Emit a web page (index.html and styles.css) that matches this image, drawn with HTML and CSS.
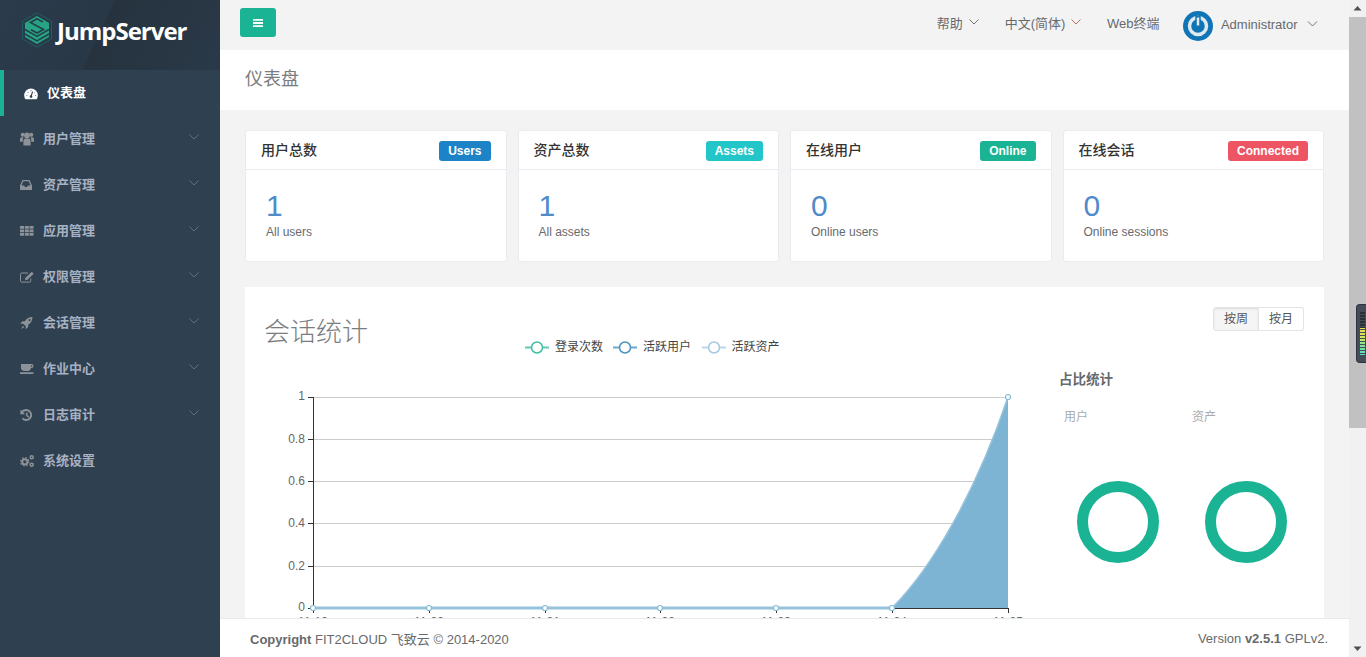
FILE: index.html
```html
<!DOCTYPE html>
<html lang="zh-CN">
<head>
  <meta charset="UTF-8">
  <title>JumpServer</title>
  <meta name="viewport" content="width=device-width, initial-scale=1.0">
  <link rel="stylesheet" href="styles.css">
</head>
<body>
<div class="app">

  <!-- Sidebar -->
  <nav class="sidebar">
    <div class="logo">
      <svg class="logo-mark" viewBox="0 0 30 36">
        <path d="M15 .8 L29.500 9 V27 L15 35.200 L.5 27 V9 Z" fill="none" stroke="#1d5f60" stroke-width="1"/>
        <path d="M15 4 L27 11 V25 L15 32 L3 25 V11 Z" fill="#26a585"/>
        <path d="M3 17.500 L15 24.500 L27 17.500M3 22 L15 29 L27 22" fill="none" stroke="#24404a" stroke-width="1.500"/>
        <path d="M21 10 L15 6.700 L8.500 10.500 L21.500 17.500 L15 21 L9 17.700" fill="none" stroke="#24404a" stroke-width="1.700"/>
      </svg>
      <span class="logo-text">JumpServer</span>
    </div>
    <ul class="menu">
      <li class="menu-item active">
        <svg class="icon" viewBox="0 0 14 14"><g transform="translate(0 2)"><path d="M7 .5A6.800 6.800 0 0 0 .2 7.300c0 1.500.4 2.900 1.200 4h11.200c.8-1.100 1.200-2.500 1.200-4A6.800 6.800 0 0 0 7 .5z" fill="currentColor"/><path d="M7 8.500 8.600 3.600M2.600 7.500h.6M3.800 4.400h.5M7 2.600v.6M10.400 4.600h.4M11 7.500h.6" stroke="#2f4050" stroke-width="1.100" fill="none"/><circle cx="7" cy="8.600" r="1.300" fill="#2f4050"/></g></svg>
        <span class="menu-label">仪表盘</span>
      </li>
      <li class="menu-item">
        <svg class="icon" viewBox="0 0 14 14"><circle cx="2.700" cy="2.800" r="2" fill="currentColor"/><circle cx="11.300" cy="2.800" r="2" fill="currentColor"/><circle cx="7" cy="3.400" r="2.900" fill="currentColor"/><path d="M0 9.800V7.600C0 6 .7 5.200 2 5.200h1.400C3 6.500 2.700 8 2.700 9.800zM14 9.800V7.600c0-1.600-.7-2.400-2-2.400h-1.400c.4 1.300.7 2.800.7 4.600zM3.400 13.600V9.500C3.400 7.300 4.300 6.500 5.600 6.500h2.800c1.300 0 2.200.8 2.200 3v4.100z" fill="currentColor"/></svg>
        <span class="menu-label">用户管理</span>
        <svg class="chevron" viewBox="0 0 10 6"><path d="M.5.5 5 5 9.500.5"/></svg>
      </li>
      <li class="menu-item">
        <svg class="icon" viewBox="0 0 14 14"><path d="M2.500 2h7L12 7.500V12H0V7.500zM3.300 3.300 1.500 7.500h2.600l.8 1.500h2.200l.8-1.500h2.600L8.700 3.300z" fill="currentColor" fill-rule="evenodd"/></svg>
        <span class="menu-label">资产管理</span>
        <svg class="chevron" viewBox="0 0 10 6"><path d="M.5.5 5 5 9.500.5"/></svg>
      </li>
      <li class="menu-item">
        <svg class="icon" viewBox="0 0 14 14"><path d="M0 2h4v2.700H0zM4.800 2h4v2.700h-4zM9.500 2h4v2.700h-4zM0 5.500h4v2.700H0zM4.800 5.500h4v2.700h-4zM9.500 5.500h4v2.700h-4zM0 9h4v2.700H0zM4.800 9h4v2.700h-4zM9.500 9h4v2.700h-4z" fill="currentColor"/></svg>
        <span class="menu-label">应用管理</span>
        <svg class="chevron" viewBox="0 0 10 6"><path d="M.5.5 5 5 9.500.5"/></svg>
      </li>
      <li class="menu-item">
        <svg class="icon" viewBox="0 0 14 14"><path d="M10.800 8.500v2.300c0 .8-.5 1.300-1.300 1.300H1.800c-.8 0-1.300-.5-1.300-1.300V4.300C.5 3.500 1 3 1.800 3H8" fill="none" stroke="currentColor" stroke-width="1"/><path d="M11.800 1.800 13.700 3.700 7.500 9.800 5 10.300 5.500 7.800z" fill="currentColor"/></svg>
        <span class="menu-label">权限管理</span>
        <svg class="chevron" viewBox="0 0 10 6"><path d="M.5.5 5 5 9.500.5"/></svg>
      </li>
      <li class="menu-item">
        <svg class="icon" viewBox="0 0 14 14"><path d="M12.500 1C8.700 1 6.300 2.800 4.800 5.300H2.400L.2 7.800h3L5.700 10.300v3l2.500-2.300V8.700C10.700 7.200 12.500 4.800 12.500 1z" fill="currentColor"/><circle cx="9.600" cy="4" r="1" fill="#2f4050"/><path d="M3 9.800 1 13l3.300-1.800z" fill="currentColor"/></svg>
        <span class="menu-label">会话管理</span>
        <svg class="chevron" viewBox="0 0 10 6"><path d="M.5.5 5 5 9.500.5"/></svg>
      </li>
      <li class="menu-item">
        <svg class="icon" viewBox="0 0 14 14"><path d="M1 2h10.500c1.200 0 2 .8 2 1.900s-.8 2-2 2H11c-.3 1.500-1.300 3-2.800 3H4C2.300 8.900 1 7.500 1 5.800zM11 3.200v1.500h.5c.4 0 .8-.3.8-.8s-.4-.7-.8-.7zM0 10.300h13.500V12H0z" fill="currentColor" fill-rule="evenodd"/></svg>
        <span class="menu-label">作业中心</span>
        <svg class="chevron" viewBox="0 0 10 6"><path d="M.5.5 5 5 9.500.5"/></svg>
      </li>
      <li class="menu-item">
        <svg class="icon" viewBox="0 0 14 14"><path d="M2.400 3.700A5 5 0 1 1 2.500 10.400" fill="none" stroke="currentColor" stroke-width="1.900"/><path d="M.4 1.500v4.800h4.800z" fill="currentColor"/><path d="M6.800 4.500v3.200L9 9" fill="none" stroke="currentColor" stroke-width="1.400"/></svg>
        <span class="menu-label">日志审计</span>
        <svg class="chevron" viewBox="0 0 10 6"><path d="M.5.5 5 5 9.500.5"/></svg>
      </li>
      <li class="menu-item">
        <svg class="icon" viewBox="0 0 14 14"><circle cx="4.800" cy="7.800" r="2.600" fill="none" stroke="currentColor" stroke-width="2"/><circle cx="4.800" cy="7.800" r="4.100" fill="none" stroke="currentColor" stroke-width="1.300" stroke-dasharray="1.600 1.620"/><circle cx="11.700" cy="3.200" r="1.500" fill="none" stroke="currentColor" stroke-width="1.500"/><circle cx="11.700" cy="10.800" r="1.500" fill="none" stroke="currentColor" stroke-width="1.500"/></svg>
        <span class="menu-label">系统设置</span>
      </li>
    </ul>
  </nav>

  <div class="main">
    <!-- Top bar -->
    <header class="navbar">
      <button class="toggle-btn">
        <svg viewBox="0 0 10 8"><path d="M0 0h10v1.800H0zM0 3.100h10v1.800H0zM0 6.200h10V8H0z" fill="#fff"/></svg>
      </button>
      <div class="nav-right">
        <span class="nav-item help">帮助 <svg class="nav-chevron" viewBox="0 0 10 6"><path d="M.5.5 5 5 9.500.5"/></svg></span>
        <span class="nav-item">中文(简体) <svg class="nav-chevron lang" viewBox="0 0 10 6"><path d="M.5.5 5 5 9.500.5"/></svg></span>
        <span class="nav-item web">Web终端</span>
        <span class="nav-item user">
          <svg class="avatar" viewBox="0 0 30 30">
            <circle cx="15" cy="15" r="15" fill="#0f75b5"/>
            <circle cx="15" cy="15" r="8.500" fill="none" stroke="#dfe9f0" stroke-width="3.500"/>
            <path d="M15 5v10" stroke="#0f75b5" stroke-width="5.500"/>
            <path d="M15 6.500v8" stroke="#dfe9f0" stroke-width="2.500"/>
          </svg>
          <span class="user-name">Administrator</span>
          <svg class="nav-chevron wide" viewBox="0 0 10 6"><path d="M.5.5 5 5 9.500.5"/></svg>
        </span>
      </div>
    </header>

    <div class="page-heading">仪表盘</div>

    <div class="content">
      <section class="cards">
        <div class="card">
          <div class="card-head"><h5>用户总数</h5><span class="badge users">Users</span></div>
          <div class="card-body"><div class="count">1</div><small>All users</small></div>
        </div>
        <div class="card">
          <div class="card-head"><h5>资产总数</h5><span class="badge assets">Assets</span></div>
          <div class="card-body"><div class="count">1</div><small>All assets</small></div>
        </div>
        <div class="card">
          <div class="card-head"><h5>在线用户</h5><span class="badge online">Online</span></div>
          <div class="card-body"><div class="count">0</div><small>Online users</small></div>
        </div>
        <div class="card">
          <div class="card-head"><h5>在线会话</h5><span class="badge connected">Connected</span></div>
          <div class="card-body"><div class="count">0</div><small>Online sessions</small></div>
        </div>
      </section>

      <section class="panel">
        <div class="panel-top">
          <h2>会话统计</h2>
          <div class="btn-group">
            <span class="btn pressed">按周</span>
            <span class="btn">按月</span>
          </div>
        </div>
        <div class="panel-row">
          <svg class="chart" viewBox="265 335 775 300">
            <!-- legend -->
            <g class="legend">
              <path d="M525 347.500h24" stroke="#63c9b3" stroke-width="2"/>
              <circle cx="537" cy="347.500" r="5.500" fill="#fff" stroke="#3cbfa4" stroke-width="1.500"/>
              <text x="555" y="351">登录次数</text>
              <path d="M613 347.500h24" stroke="#6aa9cf" stroke-width="2"/>
              <circle cx="625" cy="347.500" r="5.500" fill="#fff" stroke="#4a93c0" stroke-width="1.500"/>
              <text x="643" y="351">活跃用户</text>
              <path d="M702 347.500h24" stroke="#b9d6ea" stroke-width="2"/>
              <circle cx="714" cy="347.500" r="5.500" fill="#fff" stroke="#a5c9e2" stroke-width="1.500"/>
              <text x="731.500" y="351">活跃资产</text>
            </g>
            <!-- grid -->
            <path d="M313 397.500h695M313 439.500h695M313 481.500h695M313 523.500h695M313 566.500h695" stroke="#ccc" fill="none"/>
            <!-- area -->
            <path d="M892 608C932 568 976 492 1008 397V608Z" fill="#7db4d3"/>
            <path d="M892 608C932 568 976 492 1008 397" fill="none" stroke="#96c3dc" stroke-width="1.500"/>
            <!-- axes -->
            <path d="M308 397.500h5.500M308 439.500h5M308 481.500h5M308 523.500h5M308 566.500h5M308 608.500h5M313.500 397v216M313 608.500h695M429.500 608v5M545.500 608v5M660.500 608v5M776.500 608v5M892.500 608v5M1008.500 608v5" stroke="#333" fill="none"/>
            <path d="M313 608h579" stroke="#96c3dc" stroke-width="3"/>
            <g fill="#fff" stroke="#86bcd8" stroke-width="1.200">
              <circle cx="313" cy="608" r="2.500"/><circle cx="429" cy="608" r="2.500"/><circle cx="545" cy="608" r="2.500"/>
              <circle cx="660" cy="608" r="2.500"/><circle cx="776" cy="608" r="2.500"/><circle cx="892" cy="608" r="2.500"/>
              <circle cx="1008" cy="397" r="2.500"/>
            </g>
            <g class="y-labels">
              <text x="305" y="400">1</text><text x="305" y="443">0.8</text><text x="305" y="485">0.6</text>
              <text x="305" y="527">0.4</text><text x="305" y="570">0.2</text><text x="305" y="611">0</text>
            </g>
            <g class="x-labels">
              <text x="313" y="626">11-19</text><text x="429" y="626">11-20</text><text x="545" y="626">11-21</text>
              <text x="660" y="626">11-22</text><text x="776" y="626">11-23</text><text x="892" y="626">11-24</text><text x="1008" y="626">11-25</text>
            </g>
          </svg>
          <div class="ratio">
            <h4>占比统计</h4>
            <div class="ratio-cols">
              <div class="ratio-col"><span>用户</span><div class="donut"></div></div>
              <div class="ratio-col"><span>资产</span><div class="donut"></div></div>
            </div>
          </div>
        </div>
      </section>
    </div>

    <footer class="footer">
      <div><strong>Copyright</strong> FIT2CLOUD 飞致云 © 2014-2020</div>
      <div>Version <strong>v2.5.1</strong> GPLv2.</div>
    </footer>
  </div>

  <!-- window scrollbar -->
  <div class="scrollbar">
    <svg class="arrow" viewBox="0 0 17 17"><path d="M8.500 6 12.500 10.500H4.500Z" fill="#505050"/></svg>
    <div class="thumb"></div>
    <svg class="arrow" viewBox="0 0 17 17"><path d="M8.500 11 12.500 6.500H4.500Z" fill="#505050"/></svg>
    <div class="meter"><div class="meter-bars"></div></div>
  </div>
</div>
</body>
</html>
```

FILE: styles.css
```css
* {
  box-sizing: border-box;
}
html, body {
  margin: 0;
  padding: 0;
  height: 100%;
  overflow: hidden;
}
body {
  font-family: "Liberation Sans", "Noto Sans CJK SC", sans-serif;
  font-size: 13px;
  color: #676a6c;
  background: #f3f3f4;
}
.app {
  display: flex;
  height: 100vh;
  position: relative;
}

/* Sidebar */
.sidebar {
  width: 220px;
  flex-shrink: 0;
  background: #2f4050;
}
.logo {
  height: 70px;
  padding: 12px 0 0 22px;
  display: flex;
  align-items: flex-start;
  gap: 4px;
  background: linear-gradient(115deg, #2b3b4b 0%, #293847 45%, #26333f 46%, #2a3948 100%);
}
.logo-mark {
  width: 30px;
  height: 36px;
  flex-shrink: 0;
}
.logo-text {
  font-family: "Open Sans", sans-serif;
  font-weight: 700;
  font-size: 24px;
  line-height: 38px;
  color: #fff;
  letter-spacing: -1px;
  margin-left: 1px;
}
.menu {
  list-style: none;
  margin: 0;
  padding: 0;
}
.menu-item {
  height: 46px;
  padding-left: 20px;
  display: flex;
  align-items: center;
  color: #a7b1c2;
  font-weight: 700;
  position: relative;
}
.menu-item.active {
  color: #fff;
  padding-left: 24px;
}
.menu-item.active::before {
  content: "";
  position: absolute;
  left: 0;
  top: 0;
  bottom: 0;
  width: 4px;
  background: #1ab394;
}
.icon {
  width: 14px;
  height: 14px;
  flex-shrink: 0;
  margin-right: 9px;
  color: #8d9299;
}
.active .icon {
  color: #fff;
}
.menu-label {
  line-height: 18px;
}
.chevron {
  position: absolute;
  right: 21px;
  top: 18px;
  width: 10px;
  height: 6px;
  fill: none;
  stroke: #6d7b8a;
  stroke-width: 0.8;
}

/* Top bar */
.main {
  flex: 1;
  min-width: 0;
  display: flex;
  flex-direction: column;
}
.navbar {
  height: 50px;
  flex-shrink: 0;
  padding: 8px 31px 0 20px;
  display: flex;
  justify-content: space-between;
  align-items: flex-start;
}
.toggle-btn {
  width: 36px;
  height: 29px;
  border: none;
  border-radius: 3px;
  background: #1ab394;
  display: flex;
  align-items: center;
  justify-content: center;
  padding: 0;
}
.toggle-btn svg {
  width: 10px;
  height: 8px;
}
.nav-right {
  display: flex;
  align-items: center;
  gap: 25px;
  height: 36px;
}
.nav-item {
  display: flex;
  align-items: center;
  gap: 6px;
  padding-bottom: 8px;
  color: #676a6c;
}
.nav-item.help {
  margin-right: 1px;
}
.nav-item.web {
  margin-left: 0.5px;
}
.nav-chevron {
  width: 10px;
  height: 6px;
  fill: none;
  stroke: #666;
  stroke-width: 0.9;
}
.nav-chevron.lang {
  stroke: #b8604f;
}
.nav-chevron.wide {
  width: 11px;
  margin-left: 1.5px;
}
.user {
  margin-left: -1.5px;
  gap: 8px;
  padding-bottom: 0;
}
.user-name {
  padding-bottom: 4px;
}
.user .nav-chevron {
  margin-bottom: 4px;
}
.avatar {
  width: 30px;
  height: 30px;
}
.page-heading {
  height: 60px;
  flex-shrink: 0;
  background: #fff;
  padding-left: 25px;
  font-size: 18px;
  line-height: 58px;
  color: #7a7d80;
}

/* Content */
.content {
  flex: 1;
  min-height: 0;
  overflow: hidden;
  padding: 20px 25px 0;
}
.cards {
  display: grid;
  grid-template-columns: repeat(4, 1fr);
  gap: 11px;
  margin-bottom: 25px;
}
.card {
  height: 132px;
  background: #fff;
  border: 1px solid #e9ebf0;
  border-radius: 3px;
}
.card-head {
  height: 39px;
  padding: 0 15px;
  border-bottom: 1px solid #e9ebf0;
  display: flex;
  justify-content: space-between;
  align-items: center;
}
.card-head h5 {
  margin: 0 0 2px;
  font-size: 14px;
  font-weight: 500;
  color: #333;
}
.badge {
  height: 20px;
  padding: 0 9px;
  margin-top: 2px;
  border-radius: 3px;
  font-size: 12px;
  font-weight: 700;
  line-height: 20px;
  color: #fff;
}
.badge.users { background: #1c84c6; }
.badge.assets { background: #23c6c8; }
.badge.online { background: #1ab394; }
.badge.connected { background: #ed5565; }
.card-body {
  padding: 18px 20px;
}
.count {
  font-size: 30px;
  line-height: 36px;
  color: #4f8bc9;
}
.card-body small {
  display: block;
  font-size: 12px;
  line-height: 14px;
  margin-top: 1px;
}

/* Session panel */
.panel {
  background: #fff;
  padding: 20px;
  height: 400px;
}
.panel-top {
  display: flex;
  justify-content: space-between;
  align-items: flex-start;
  height: 28px;
}
.panel-top h2 {
  margin: 10px 0 0 -1px;
  font-size: 26px;
  font-weight: 300;
  line-height: 30px;
  color: #7a7d80;
}
.btn-group {
  display: flex;
}
.btn {
  height: 24px;
  padding: 0 10px;
  border: 1px solid #e2e4e8;
  font-size: 12px;
  line-height: 22px;
  color: #555;
  background: #fff;
}
.btn:first-child {
  border-radius: 3px 0 0 3px;
}
.btn:last-child {
  border-left: none;
  border-radius: 0 3px 3px 0;
}
.btn.pressed {
  background: #f5f5f5;
  box-shadow: inset 0 1px 2px rgba(0,0,0,0.1);
}
.panel-row {
  display: flex;
  gap: 19px;
}
.chart {
  width: 775px;
  height: 300px;
  flex-shrink: 0;
}
.chart text {
  font-family: "Liberation Sans", "Noto Sans CJK SC", sans-serif;
  font-size: 12px;
  fill: #444;
}
.y-labels text {
  text-anchor: end;
  fill: #666;
}
.x-labels text {
  text-anchor: middle;
  fill: #666;
}
.ratio {
  flex: 1;
}
.ratio h4 {
  margin: 36px 0 0;
  font-size: 13.5px;
  font-weight: 700;
  line-height: 18px;
  color: #676a6c;
}
.ratio-cols {
  display: grid;
  grid-template-columns: 128px 128px;
  margin-top: 20px;
}
.ratio-col span {
  display: block;
  padding-left: 5px;
  font-size: 12px;
  line-height: 16px;
  color: #aaa;
}
.donut {
  width: 82px;
  height: 82px;
  margin: 56px 0 0 18px;
  border: 11.5px solid #1ab394;
  border-radius: 50%;
}

/* Footer */
.footer {
  height: 39px;
  flex-shrink: 0;
  background: #fff;
  border-top: 1px solid #e7eaec;
  padding: 0 21px 0 30px;
  display: flex;
  justify-content: space-between;
  align-items: center;
  font-size: 13px;
}

/* Scrollbar */
.scrollbar {
  width: 17px;
  flex-shrink: 0;
  background: #f1f1f1;
  display: flex;
  flex-direction: column;
}
.arrow {
  width: 17px;
  height: 17px;
  flex-shrink: 0;
}
.thumb {
  height: 411px;
  background: #c1c1c1;
  margin-bottom: auto;
}

/* Overlay widget on the scrollbar */
.meter {
  position: absolute;
  right: 0;
  top: 304px;
  width: 10px;
  height: 59px;
  padding: 7px 1px 7px 3px;
  border-radius: 4px 0 0 4px;
  background: #454c59;
  border: 1px solid #2f353e;
  border-right: none;
}
.meter-bars {
  height: 100%;
  background:
    repeating-linear-gradient(to bottom, transparent 0 2px, #454c59 2px 3px),
    linear-gradient(to bottom, #2a3039 0 38%, #e8dc55 38%, #d6e65c 62%, #8fe68a 72%, #4fdcc0 100%);
}
```
